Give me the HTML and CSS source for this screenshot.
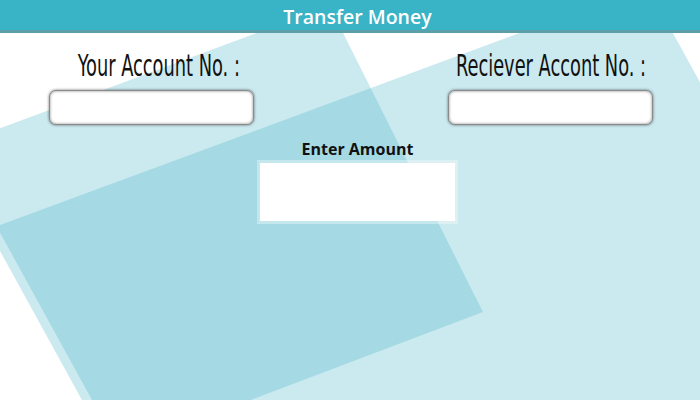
FILE: index.html
```html
<!DOCTYPE html>
<html>
<head>
<meta charset="utf-8">
<title>Transfer Money</title>
<link rel="stylesheet" href="styles.css">
</head>
<body>
<div class="page">
  <svg class="backdrop" width="700" height="400" viewBox="0 0 700 400" aria-hidden="true">
    <polygon class="sheet" points="329.5,6 483,312 111,453 -56,149"/>
    <polygon class="sheet" points="-3.5,226.3 647,-14 985,600 202,600"/>
  </svg>
  <header class="topbar"><h1 class="title">Transfer Money</h1></header>
  <main class="content">
    <section class="accounts">
      <div class="field">
        <label class="field-label field-label-shift"><span class="label-text">Your Account No. :</span></label>
        <input class="field-input" type="text">
      </div>
      <div class="field">
        <label class="field-label"><span class="label-text">Reciever Accont No. :</span></label>
        <input class="field-input" type="text">
      </div>
    </section>
    <section class="amount">
      <div class="amount-label">Enter Amount</div>
      <input class="amount-input" type="text">
    </section>
  </main>
</div>
</body>
</html>
```
FILE: styles.css
```css
html, body {
  margin: 0;
  padding: 0;
  background: #ffffff;
}
.page {
  position: relative;
  width: 700px;
  height: 400px;
  overflow: hidden;
  font-family: "Open Sans", "Liberation Sans", sans-serif;
}
.backdrop {
  position: absolute;
  left: 0;
  top: 0;
  z-index: 0;
}
.sheet {
  fill: rgba(62, 177, 199, 0.27);
}
.topbar {
  position: relative;
  z-index: 1;
  height: 30px;
  background: #39b3c6;
  border-bottom: 3px solid #5c9fa8;
  display: flex;
  align-items: center;
  justify-content: center;
  padding-left: 15px;
}
.title {
  margin: 0;
  color: #ffffff;
  font-size: 19.5px;
  font-weight: 600;
  line-height: 30px;
  padding-top: 3px;
}
.content {
  position: relative;
  z-index: 1;
}
.accounts {
  display: flex;
  justify-content: space-between;
  padding: 0 47px 0 49px;
  margin-top: 17px;
}
.field {
  width: 205px;
  display: flex;
  flex-direction: column;
  align-items: center;
}
.field-label {
  display: block;
  height: 32px;
  line-height: 32px;
  font-family: "DejaVu Sans Condensed", "DejaVu Sans", sans-serif;
  font-stretch: condensed;
  font-size: 30px;
  color: #111;
  white-space: nowrap;
  text-align: center;
}
.field-label-shift {
  padding-left: 14px;
}
.label-text {
  display: inline-block;
  transform: scaleX(0.66);
}
.field-input {
  box-sizing: border-box;
  width: 205px;
  height: 35px;
  margin-top: 8px;
  border: 1px solid #8a8a8a;
  border-radius: 7px;
  background: #ffffff;
  box-shadow: 0 0 3px rgba(0, 0, 0, 0.55), inset 0 0 3px rgba(0, 0, 0, 0.45);
  outline: none;
}
.amount {
  display: flex;
  flex-direction: column;
  align-items: center;
  padding-left: 15px;
  margin-top: 14px;
}
.amount-label {
  font-size: 16px;
  font-weight: 700;
  color: #111;
  line-height: 20px;
}
.amount-input {
  box-sizing: border-box;
  width: 201px;
  height: 64px;
  margin-top: 1px;
  border: 3px solid rgba(255, 255, 255, 0.35);
  background: #ffffff;
  background-clip: padding-box;
  outline: none;
}
```
